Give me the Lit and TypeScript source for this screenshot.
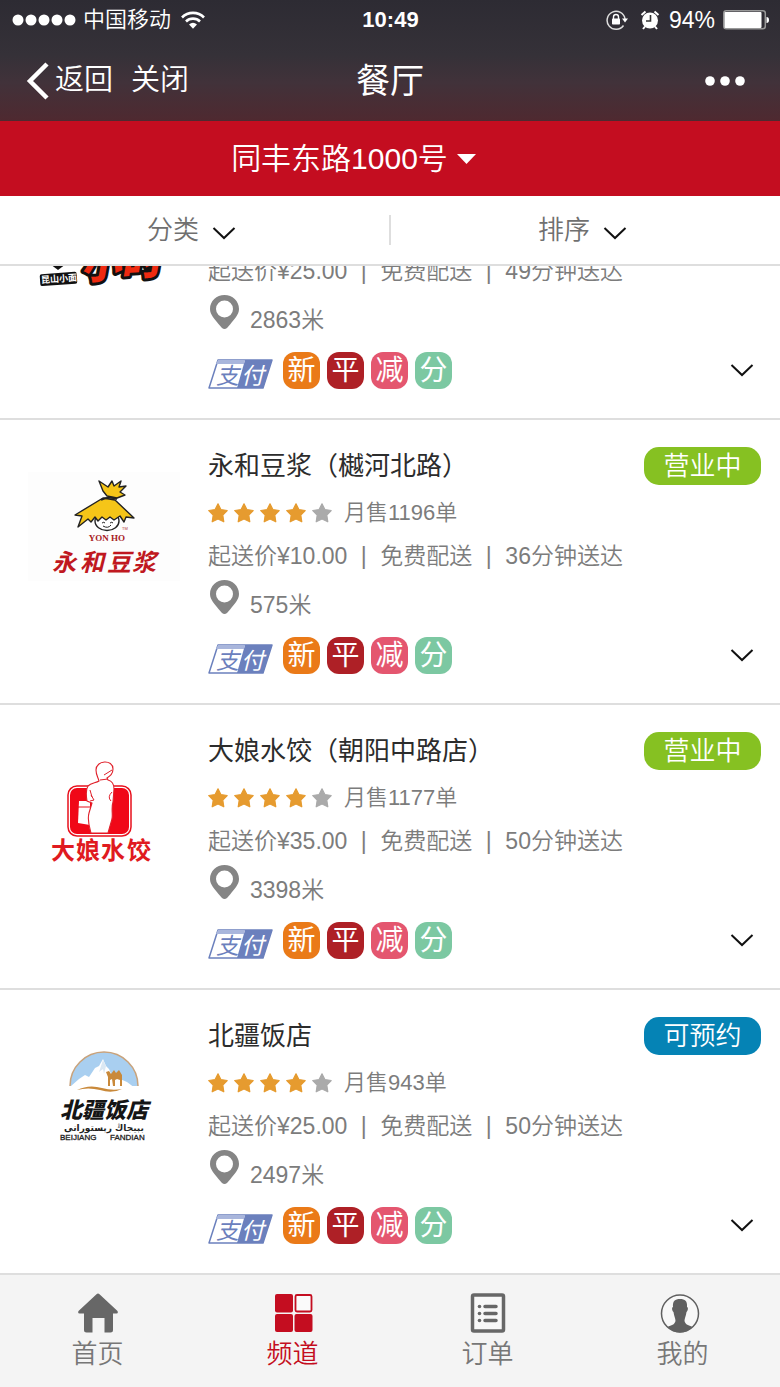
import { LitElement, html, css, svg, nothing, type TemplateResult } from "lit";
import { customElement, property } from "lit/decorators.js";

interface Shop {
  name?: string;
  stars?: number;
  sales?: number;
  minPrice: string;
  minutes: number;
  metres: number;
  status?: "open" | "booking";
  logo: TemplateResult;
}

const noodleLogo = svg`
  <path d="M22 99h16l-8 6z" fill="#111"/>
  <g transform="rotate(-4 30 114)">
    <rect x="12" y="108" width="37" height="12" rx="2" fill="#111"/>
    <text x="13" y="117" font-size="9" font-weight="700" fill="#fff">昆山小面</text>
  </g>
  <text x="53" y="112" font-size="40" font-weight="900" font-style="italic" fill="#ee2a10" stroke="#111"
    stroke-width="6" stroke-linejoin="round" paint-order="stroke" transform="rotate(-4 92 110)">小时</text>`;

const yonhoLogo = svg`
  <rect y="22" width="152" height="109" fill="#fdfdfd"/>
  <ellipse cx="79" cy="71" rx="12" ry="9.5" fill="#fff" stroke="#222" stroke-width="1.4"/>
  <path d="M74 73q2-1.500 3 0M82 73q2-1.500 3 0M75 76q5 3 8-1" fill="none" stroke="#222"/>
  <path d="M75 48L47 65l7 1-4 11 10-8 3 3 4-5 3 4 4-4 4 3 4-3 4 3 6-4 4 6 2-5 8 1-19-18z"
    fill="#f5c518" stroke="#222" stroke-width="1.400" stroke-linejoin="round"/>
  <path d="M71 31l9 6 4-6 2 5 7-5-2 6 7-1-6 6 5 3-8 3-10-2-4-5z"
    fill="#f5c518" stroke="#222" stroke-width="1.400" stroke-linejoin="round"/>
  <path d="M73 50q7-4 16-1" fill="none" stroke="#222" stroke-width="2"/>
  <text x="94" y="80" font-size="4" fill="#b03030">TM</text>
  <text class="serif" x="79" y="91" font-size="9" font-weight="700" text-anchor="middle" fill="#a8201c">YON HO</text>
  <text x="24 52 79 104" y="121" font-size="24" font-weight="700" font-style="italic" fill="#c01820">永和豆浆</text>`;

const dumplingLogo = svg`
  <rect x="40" y="51" width="63" height="50" rx="9" fill="#fff" stroke="#e8101c" stroke-width="1.500"/>
  <rect x="42" y="53" width="59" height="46" rx="7" fill="#f00818"/>
  <path d="M51 66h11v24l-12-2z" fill="#fff"/>
  <path d="M50 72h12" stroke="#e8101c"/>
  <path d="M71 46C70 42 68 40 68 35c0-10 17-11 17-1 0 5-3 7-6 9l1 2c4 1 6 4 6 9l-1 13c-2 6 0 12-1 17l-4 14H63c-2-7-4-13-2-20l3-10-5-2c-1-6-1-12 1-15 3-3 8-3 11-5z"
    fill="#fff" stroke="#e0202a" stroke-width="1.100"/>
  <path d="M84 35l-8 5M72 45l8-1M62 55l2 7M84 57q-5 5-1 9M62 66l4-1-3-5" fill="none" stroke="#e0202a"/>
  <text x="23 48 73 99" y="124" font-size="24" font-weight="700" fill="#e01a20">大娘水饺</text>`;

const beijiangLogo = svg`
  <path d="M42 66a34 34 0 0 1 68 0" fill="#a9cff0" stroke="#c9a37c" stroke-width="1.500"/>
  <path d="M43 66l8-7 6-4 4 2 6-9 4-2 4-7 3 7 3 3 3 7 8 3 7 3 8 6v4H43z" fill="#fff"/>
  <path d="M75 40l-4 12 4-3 1 5 2-8z" fill="#dbe8f3"/>
  <path d="M49 70q12-6 25-2 10 3 20 1-10 5-22 1-12-3-23 0z" fill="#c9893a"/>
  <path d="M80 66v-9l-2-5 3-1 2 3 3-4 2 3 3-3 3 5v11h-2v-6l-3-1-2 1v6h-2l-1-7-2 1v6z" fill="#c9893a"/>
  <text x="32 54 76 98" y="98" font-size="22" font-weight="900" font-style="italic" fill="#151515">北疆饭店</text>
  <text class="arabic" x="76" y="111" font-size="9" font-weight="700" text-anchor="middle" fill="#222">بېيجاڭ رېستورانى</text>
  <text x="32" y="120" font-size="8" fill="#222" stroke="#222" stroke-width=".3">BEIJIANG</text>
  <text x="82" y="120" font-size="8" fill="#222" stroke="#222" stroke-width=".3">FANDIAN</text>`;

const shops: Shop[] = [
  { minPrice: "25.00", minutes: 49, metres: 2863, logo: noodleLogo },
  { name: "永和豆浆（樾河北路）", stars: 4, sales: 1196, minPrice: "10.00", minutes: 36, metres: 575, status: "open", logo: yonhoLogo },
  { name: "大娘水饺（朝阳中路店）", stars: 4, sales: 1177, minPrice: "35.00", minutes: 50, metres: 3398, status: "open", logo: dumplingLogo },
  { name: "北疆饭店", stars: 4, sales: 943, minPrice: "25.00", minutes: 50, metres: 2497, status: "booking", logo: beijiangLogo },
];

const chevron = html`<svg class="chevron" width="24" height="16" viewBox="0 0 24 16" aria-hidden="true">
  <path d="M1.500 3L12 13 22.500 3" fill="none" stroke="#111" stroke-width="2"/></svg>`;

@customElement("shop-row")
export class ShopRow extends LitElement {
  @property({ attribute: false }) shop!: Shop;

  static styles = css`
    :host {
      display: flex;
      flex: none;
      align-items: flex-end;
      border-top: 2px solid #dedede;
      padding: 0 19px 0 28px;
      color: #7c7c7c;
      font-size: 23px;
      line-height: 30px;
    }
    .logo { flex: none; margin: 0 28px 101px 0; }
    .serif { font-family: "Liberation Serif", serif; }
    .arabic { font-family: "DejaVu Sans", sans-serif; }
    .body { flex: 1; min-width: 0; padding: 27px 0 29px; }
    .head { display: flex; justify-content: space-between; align-items: center; margin-bottom: 13px; }
    .name { margin: 0; color: #2c2c2c; font-size: 26px; line-height: 38px; font-weight: 400; white-space: nowrap; }
    .badge {
      box-sizing: border-box;
      width: 117px;
      border-radius: 15px;
      color: #fff;
      font-size: 26px;
      line-height: 38px;
      text-align: center;
    }
    .open { background: #86c122; }
    .booking { background: #0583b5; }
    .rating { display: flex; align-items: center; margin-bottom: 13px; font-size: 22px; }
    .stars { display: flex; gap: 6px; margin-right: 12px; }
    .terms { display: flex; white-space: nowrap; margin-bottom: 9px; }
    .bar { width: 33px; text-align: center; }
    .place { display: flex; gap: 11px; height: 40px; margin-bottom: 16px; }
    .pin { flex: none; margin-left: 2px; }
    .metres { align-self: flex-end; }
    .foot { display: flex; align-items: center; height: 38px; }
    .pay { margin: 8px 10px 0 0; font-style: italic; }
    .tag {
      width: 37px;
      margin-right: 7px;
      border-radius: 12px;
      color: #fff;
      font-size: 28px;
      line-height: 37px;
      font-weight: 400;
      text-align: center;
    }
    .new { background: #ea7a18; }
    .flat { background: #ae2026; }
    .cut { background: #e4566f; }
    .points { background: #7cc8a2; }
    .more { margin: 0 7px 0 auto; padding: 0; border: 0; background: none; display: flex; }
  `;

  render() {
    const s = this.shop;
    return html`
      <svg class="logo" width="152" height="152" viewBox="0 0 152 152" aria-hidden="true">${s.logo}</svg>
      <div class="body">
        ${s.name
          ? html`<div class="head">
                <h2 class="name">${s.name}</h2>
                <span class="badge ${s.status}">${s.status === "open" ? "营业中" : "可预约"}</span>
              </div>
              <div class="rating">
                <span class="stars">
                  ${[0, 1, 2, 3, 4].map(
                    (i) => html`<svg width="20" height="20" viewBox="0 0 20 20" aria-hidden="true">
                      <path d="M10 .8l2.900 5.700 6.300 1-4.400 4.700 1 6.600L10 16l-5.800 2.800 1-6.600L.8 7.500l6.300-1z"
                        stroke-width="1.200" stroke-linejoin="round"
                        stroke=${i < (s.stars ?? 0) ? "#e69b2f" : "#aaa"}
                        fill=${i < (s.stars ?? 0) ? "#e69b2f" : "#aaa"}/></svg>`
                  )}
                </span>
                <span>月售${s.sales}单</span>
              </div>`
          : nothing}
        <div class="terms">
          <span>起送价¥${s.minPrice}</span><span class="bar">|</span><span>免费配送</span><span class="bar">|</span
          ><span>${s.minutes}分钟送达</span>
        </div>
        <div class="place">
          <svg class="pin" width="29" height="34" viewBox="0 0 29 34" aria-hidden="true">
            <path fill-rule="evenodd" fill="#858585"
              d="M14.500 0C6.500 0 0 6 0 14c0 6 5 10 8.500 15l3.500 4q2.500 2 5 0l3.500-4C24 24 29 20 29 14 29 6 22.500 0 14.500 0zm0 5.500a8.500 8.500 0 1 1 0 17 8.500 8.500 0 0 1 0-17z"/></svg>
          <span class="metres">${s.metres}米</span>
        </div>
        <div class="foot">
          <svg class="pay" width="65" height="30" viewBox="0 0 65 30">
            <path d="M10 1h54L55 29H1z" fill="#fff" stroke="#6b80bd" stroke-width="1.500" stroke-linejoin="round"/>
            <path d="M37 1h27L55 29H29z" fill="#6b80bd"/>
            <path d="M10 1h27l-1 4H8z" fill="#a9b6dc"/>
            <text x="8" y="25" font-size="23" font-weight="400" fill="#6b80bd">支</text>
            <text x="33" y="25" font-size="23" font-weight="400" fill="#fff">付</text>
          </svg>
          <span class="tag new">新</span>
          <span class="tag flat">平</span>
          <span class="tag cut">减</span>
          <span class="tag points">分</span>
          <button class="more" type="button" aria-label="展开">${chevron}</button>
        </div>
      </div>
    `;
  }
}

@customElement("app-root")
export class AppRoot extends LitElement {
  static styles = css`
    :host {
      display: flex;
      flex-direction: column;
      height: 100vh;
      overflow: hidden;
      background: #fff;
      font-family: "Liberation Sans", "Noto Sans CJK SC", sans-serif;
      font-weight: 350;
      line-height: 1;
    }
    button { padding: 0; border: 0; background: none; font: inherit; color: inherit; }
    a { color: inherit; text-decoration: none; }
    .top {
      flex: none;
      background: linear-gradient(#2d2b33, #353138 45%, #41323a 68%, #4f2930);
      color: #fff;
    }
    .status, .nav { display: grid; grid-template-columns: 1fr auto 1fr; align-items: center; }
    .status { height: 40px; padding: 0 11px 0 12px; font-size: 22px; }
    .left, .right { display: flex; align-items: center; }
    .right { justify-content: flex-end; }
    .carrier { margin: 0 10px 0 7px; }
    .time { font-weight: 700; }
    .percent { margin: 0 8px 0 9px; font-size: 23px; }
    .lock { margin-right: 12px; }
    .nav { height: 81px; padding: 0 35px 0 26px; font-size: 29px; }
    .back { display: flex; align-items: center; gap: 6px; margin-right: 18px; }
    .title { margin: 0; padding-left: 9px; font-size: 34px; font-weight: 400; }
    .menu { display: flex; }
    .address {
      flex: none;
      display: flex;
      align-items: center;
      justify-content: center;
      height: 75px;
      padding-right: 73px;
      background: #c40d20;
      color: #fff;
      font-size: 30px;
    }
    .address button { display: flex; align-items: center; gap: 9px; }
    .filters { flex: none; display: flex; align-items: center; height: 68px; border-bottom: 2px solid #dedede; }
    .filter {
      flex: 1;
      display: flex;
      align-items: center;
      justify-content: center;
      gap: 13px;
      height: 30px;
      padding-right: 6px;
      color: #707070;
      font-size: 26px;
    }
    .filter .chevron { margin-top: 6px; }
    .filter + .filter { border-left: 2px solid #dedede; }
    .list { flex: 1; min-height: 0; display: flex; flex-direction: column; justify-content: flex-end; overflow: hidden; }
    .tabs {
      flex: none;
      display: flex;
      box-sizing: border-box;
      height: 114px;
      padding-top: 18px;
      border-top: 2px solid #dedede;
      background: #f4f4f4;
      color: #777;
    }
    .tab { flex: 1; display: flex; flex-direction: column; align-items: center; gap: 6px; font-size: 26px; line-height: 30px; }
    .on { color: #c40d20; }
  `;

  render() {
    return html`
      <header class="top">
        <div class="status">
          <span class="left">
            <svg width="64" height="12" viewBox="0 0 64 12" aria-hidden="true">
              ${[6, 19, 32, 45, 58].map((x) => svg`<circle cx=${x} cy="6" r="5.500" fill="#fff"/>`)}
            </svg>
            <span class="carrier">中国移动</span>
            <svg width="24" height="18" viewBox="0 0 24 18" aria-hidden="true">
              <g fill="none" stroke="#fff" stroke-width="2.600">
                <path d="M1 6.500a15.500 15.500 0 0 1 22 0"/><path d="M5 10.500a10 10 0 0 1 14 0"/>
              </g>
              <path d="M8 13.500q4-3.500 8 0L12 17.800z" fill="#fff"/>
            </svg>
          </span>
          <span class="time">10:49</span>
          <span class="right">
            <svg class="lock" width="22" height="22" viewBox="0 0 22 22" aria-hidden="true">
              <path d="M17.500 16.500A9 9 0 1 1 19 10" fill="none" stroke="#ddd" stroke-width="1.500"/>
              <path d="M16 9.500h6l-3 4z" fill="#fff"/>
              <rect x="6" y="9.500" width="8" height="6" rx=".8" fill="#fff"/>
              <path d="M7.500 10V8a2.500 2.500 0 0 1 5 0v2" fill="none" stroke="#fff" stroke-width="1.400"/>
            </svg>
            <svg width="20" height="20" viewBox="0 0 20 20" aria-hidden="true">
              <circle cx="10" cy="10.500" r="8" fill="#fff"/>
              <path d="M1.500 5l4-3.500M18.500 5l-4-3.500M5 16.500L3 19M15 16.500l2 2.500" stroke="#fff" stroke-width="2"/>
              <path d="M10.500 5v6H6" fill="none" stroke="#333" stroke-width="1.600"/>
            </svg>
            <span class="percent">94%</span>
            <svg width="46" height="20" viewBox="0 0 46 20" aria-hidden="true">
              <rect x=".8" y=".8" width="41.500" height="18" rx="2.500" fill="none" stroke="#999" stroke-width="1.500"/>
              <rect x="1.500" y="2" width="37" height="16" rx="1" fill="#fff"/>
              <path d="M43.500 7q2.500 0 2.500 3t-2.500 3z" fill="#fff"/>
            </svg>
          </span>
        </div>
        <nav class="nav">
          <span class="left">
            <button class="back" type="button">
              <svg width="23" height="38" viewBox="0 0 23 38" aria-hidden="true">
                <path d="M21 2L4 19l17 17" fill="none" stroke="#fff" stroke-width="4.500"/></svg>返回</button>
            <button type="button">关闭</button>
          </span>
          <h1 class="title">餐厅</h1>
          <span class="right">
            <button class="menu" type="button" aria-label="更多">
              <svg width="40" height="10" viewBox="0 0 40 10" aria-hidden="true">
                <g fill="#fff"><circle cx="5" cy="5" r="4.800"/><circle cx="20" cy="5" r="4.800"/><circle cx="35" cy="5" r="4.800"/></g>
              </svg>
            </button>
          </span>
        </nav>
      </header>
      <div class="address">
        <button type="button">
          同丰东路1000号
          <svg width="19" height="10" viewBox="0 0 19 10" aria-hidden="true"><path d="M0 0h19L9.500 10z" fill="#fff"/></svg>
        </button>
      </div>
      <div class="filters">
        <button class="filter" type="button">分类 ${chevron}</button>
        <button class="filter" type="button">排序 ${chevron}</button>
      </div>
      <main class="list">${shops.map((s) => html`<shop-row .shop=${s}></shop-row>`)}</main>
      <nav class="tabs">
        <a class="tab" href="#home">
          <svg width="40" height="40" viewBox="0 0 40 40" aria-hidden="true">
            <path d="M18.500 1.200q1.500-1.200 3 0L39.500 18q1 2.500-1 2.500H35V37q0 2.500-2.500 2.500h-6V25h-12v14.500h-6Q6 39.500 6 37V20.500H1.500q-2 0-1-2.500z" fill="#676767"/>
          </svg>首页</a>
        <a class="tab on" href="#channel">
          <svg width="40" height="40" viewBox="0 0 40 40" aria-hidden="true">
            <g fill="#c40d20"><rect x="2" y="1" width="18" height="18.500" rx="2"/><rect x="2" y="21" width="18" height="18" rx="2"/><rect x="21.500" y="21" width="18" height="18" rx="2"/></g>
            <rect x="22.500" y="2" width="16" height="16.500" rx="1.500" fill="#fafafa" stroke="#c40d20" stroke-width="1.800"/>
          </svg>频道</a>
        <a class="tab" href="#orders">
          <svg width="40" height="40" viewBox="0 0 40 40" aria-hidden="true">
            <rect x="4.500" y="2" width="31" height="36" rx="1.500" fill="#f8f8f8" stroke="#676767" stroke-width="3.500"/>
            <path d="M17 13.500h11M17 20.500h11M17 27.500h11" stroke="#676767" stroke-width="3.500" stroke-linecap="round"/>
            <g fill="#676767"><circle cx="11.500" cy="13.500" r="1.800"/><circle cx="11.500" cy="20.500" r="1.800"/><circle cx="11.500" cy="27.500" r="1.800"/></g>
          </svg>订单</a>
        <a class="tab" href="#mine">
          <svg width="46" height="40" viewBox="0 0 46 40" aria-hidden="true">
            <circle cx="20" cy="20.500" r="18.500" fill="#f8f8f8" stroke="#606060" stroke-width="1.500"/>
            <path d="M20 6c5 0 7.500 2 7 8 1.500 0 1 4-.5 5-.5 4-2 6-2 9 1 4 4 4 8 6q-5 5.500-12.500 5.500T7.500 34c4-2 7-2 8-6 0-3-1.500-5-2-9-1.500-1-2-5-.5-5-.5-6 2-8 7-8z" fill="#606060"/>
          </svg>我的</a>
      </nav>
    `;
  }
}
